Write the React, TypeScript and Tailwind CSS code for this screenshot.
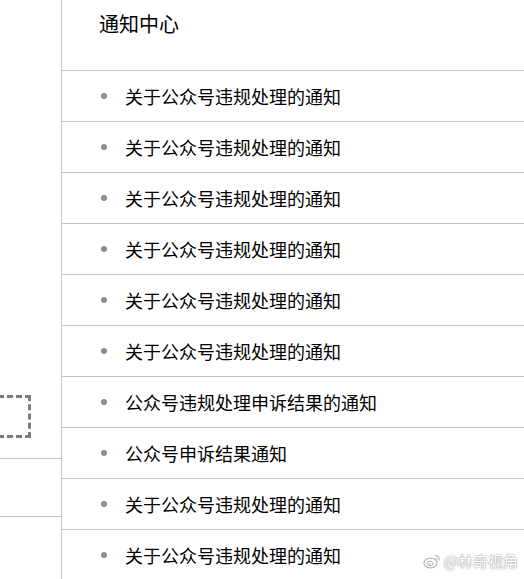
const notices = [
  "关于公众号违规处理的通知",
  "关于公众号违规处理的通知",
  "关于公众号违规处理的通知",
  "关于公众号违规处理的通知",
  "关于公众号违规处理的通知",
  "关于公众号违规处理的通知",
  "公众号违规处理申诉结果的通知",
  "公众号申诉结果通知",
  "关于公众号违规处理的通知",
  "关于公众号违规处理的通知",
];

function WeiboLogo() {
  return (
    <svg width="18" height="16" viewBox="0 0 18 16" fill="none">
      <ellipse cx="7.5" cy="10" rx="6.5" ry="4.8" fill="#fff" stroke="#b8b8b8" strokeWidth="1.2" />
      <ellipse cx="7" cy="10.5" rx="3" ry="2.2" fill="none" stroke="#b8b8b8" strokeWidth="1" />
      <circle cx="6.5" cy="10.8" r="0.9" fill="#b8b8b8" />
      <path d="M12 2.5a4 4 0 0 1 4.2 4.5" stroke="#b8b8b8" strokeWidth="1.2" strokeLinecap="round" />
      <path d="M12.2 5a1.6 1.6 0 0 1 1.8 1.9" stroke="#b8b8b8" strokeWidth="1" strokeLinecap="round" />
    </svg>
  );
}

export default function App() {
  return (
    <main
      className="relative flex w-[524px] h-[579px] overflow-hidden bg-white text-black"
      style={{ fontFamily: '"Noto Sans CJK SC", "Noto Sans", sans-serif' }}
    >
      {/* Left sidebar */}
      <aside className="w-[62px] shrink-0 border-r border-[#c4c4cc]">
        <div className="mt-[395px] ml-[-20px] w-[51px] h-[43px] border-[3px] border-dashed border-[#7c7c7c]" />
        <div className="mt-[20px] border-t border-[#c4c4cc]" />
        <div className="mt-[57px] border-t border-[#c4c4cc]" />
      </aside>

      {/* Notice list */}
      <section className="flex-1">
        <div className="h-[71px] border-b border-[#c4c4cc] pl-[37px] pt-[9px]">
          <h1 className="text-[20px] leading-[30px]">通知中心</h1>
        </div>
        <ul>
          {notices.map((title, index) => (
            <li
              key={index}
              className="flex h-[51px] items-center border-b border-[#c4c4cc] pl-[39px] pb-[1px]"
            >
              <span className="w-[6px] h-[6px] rounded-full bg-[#8c8c8c]" />
              <span className="ml-[18px] text-[18px] leading-[24px]">{title}</span>
            </li>
          ))}
        </ul>
      </section>

      {/* Watermark */}
      <div className="absolute right-[6px] bottom-[9px] flex items-center gap-[3px]">
        <WeiboLogo />
        <span
          className="text-[15px] text-white leading-[18px]"
          style={{ textShadow: "0 0 2px #9a9a9a, 0 0 1px #9a9a9a" }}
        >
          @林奇视角
        </span>
      </div>
    </main>
  );
}
